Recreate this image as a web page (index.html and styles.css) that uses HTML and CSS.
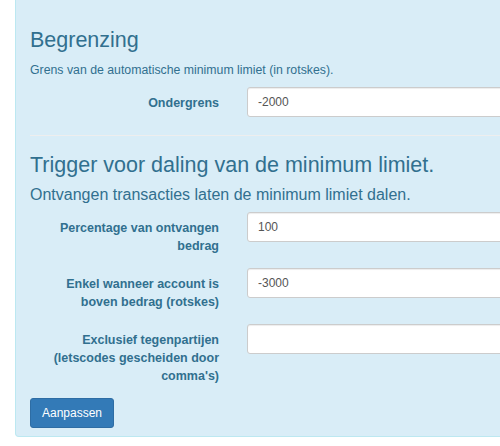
FILE: index.html
```html
<!DOCTYPE html>
<html lang="nl">
<head>
<meta charset="utf-8">
<title>Minimum limiet</title>
<link rel="stylesheet" href="styles.css">
</head>
<body>
<div class="panel">
  <form class="form">
    <h3 class="title">Begrenzing</h3>
    <p class="help">Grens van de automatische minimum limiet (in rotskes).</p>
    <div class="row">
      <label class="label" for="f1">Ondergrens</label>
      <input class="input" id="f1" type="text" value="-2000">
    </div>
    <hr class="sep">
    <h3 class="title title-2">Trigger voor daling van de minimum limiet.</h3>
    <p class="lead">Ontvangen transacties laten de minimum limiet dalen.</p>
    <div class="row row-spaced">
      <label class="label" for="f2">Percentage van ontvangen bedrag</label>
      <input class="input" id="f2" type="text" value="100">
    </div>
    <div class="row row-spaced">
      <label class="label" for="f3">Enkel wanneer account is boven bedrag (rotskes)</label>
      <input class="input" id="f3" type="text" value="-3000">
    </div>
    <div class="row row-spaced">
      <label class="label" for="f4">Exclusief tegenpartijen (letscodes gescheiden door comma's)</label>
      <input class="input" id="f4" type="text" value="">
    </div>
    <button class="btn" type="button">Aanpassen</button>
  </form>
</div>
</body>
</html>
```
FILE: styles.css
```css
html, body {
  margin: 0;
  padding: 0;
  overflow: hidden;
  background: #ffffff;
}

body {
  font-family: "Liberation Sans", Arial, sans-serif;
  color: #31708f;
}

.panel {
  margin-left: 15px;
  width: 800px;
  box-sizing: border-box;
  background: #d9edf7;
  border: 1px solid #bce8f1;
  border-top: none;
  border-radius: 0 0 4px 4px;
  padding: 28px 15px 8px 14px;
}

.form {
  display: flex;
  flex-direction: column;
  align-items: flex-start;
}

.title {
  margin: 0;
  font-size: 21.5px;
  font-weight: normal;
  line-height: 24.2px;
  color: #31708f;
}

.title-2 {
  margin-top: 17px;
}

.help {
  margin: 9px 0 8px;
  font-size: 12.3px;
  line-height: 18px;
}

.lead {
  margin: 7px 0 6px;
  font-size: 16px;
  line-height: 22px;
}

.row {
  display: flex;
  align-items: flex-start;
  align-self: stretch;
}

.row-spaced {
  margin-bottom: 13px;
}

.label {
  flex: none;
  width: 189px;
  box-sizing: border-box;
  padding: 7px 0 0 10px;
  margin-right: 28px;
  text-align: right;
  font-size: 12.5px;
  font-weight: bold;
  line-height: 18px;
  color: #31708f;
}

.input {
  flex: 1;
  height: 30px;
  box-sizing: border-box;
  padding: 5px 10px;
  font-family: "Liberation Sans", Arial, sans-serif;
  font-size: 12px;
  line-height: 18px;
  color: #555555;
  background: #ffffff;
  border: 1px solid #cccccc;
  border-radius: 3px;
  box-shadow: inset 0 1px 1px rgba(0, 0, 0, 0.075);
}

.sep {
  align-self: stretch;
  margin: 18px 0 0;
  border: 0;
  border-top: 1px solid #eeeeee;
  height: 0;
}

.btn {
  height: 30px;
  box-sizing: border-box;
  padding: 5px 11px;
  font-family: "Liberation Sans", Arial, sans-serif;
  font-size: 12px;
  line-height: 18px;
  color: #ffffff;
  background: #337ab7;
  border: 1px solid #2e6da4;
  border-radius: 3px;
}
```
